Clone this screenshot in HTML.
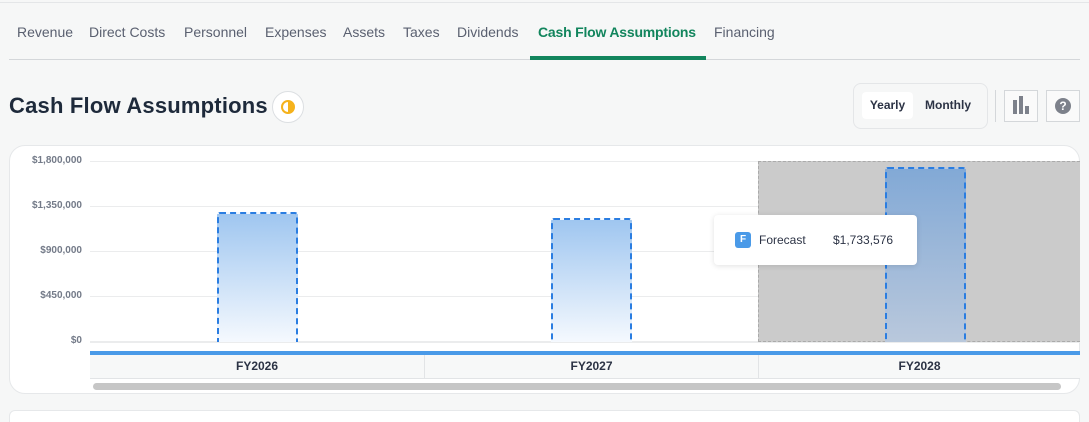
<!DOCTYPE html><html><head><style>
*{box-sizing:border-box;margin:0;padding:0}
html,body{width:1089px;height:422px;overflow:hidden}
body{background:#f6f7f7;font-family:"Liberation Sans",sans-serif;position:relative;color:#2c3345}
.a{position:absolute}
.tab{position:absolute;top:24px;font-size:14px;color:#5a6070;white-space:nowrap}
.yl{position:absolute;right:1007px;font-size:10px;color:#737a88;font-weight:bold;text-align:right}
.gl{position:absolute;left:90px;width:990px;height:1px;background:#ebeced}
.bar{position:absolute;width:81px;border:2px dashed #2a7de1;border-bottom:none;border-radius:3px 3px 0 0;background:linear-gradient(#9fc6f0,#f5f9fe)}
.xl{position:absolute;top:355px;height:24px;font-size:12px;font-weight:bold;color:#2c3345;text-align:center;line-height:22px;border-right:1px solid #e2e4e6}
</style></head><body>
<div class="a" style="left:0;top:2px;width:1089px;height:1px;background:#e4e6e8"></div>
<div class="tab" style="left:17px">Revenue</div>
<div class="tab" style="left:89px">Direct Costs</div>
<div class="tab" style="left:184px">Personnel</div>
<div class="tab" style="left:265px">Expenses</div>
<div class="tab" style="left:343px">Assets</div>
<div class="tab" style="left:403px">Taxes</div>
<div class="tab" style="left:457px">Dividends</div>
<div class="tab" style="left:538px;color:#12855d;font-weight:bold;letter-spacing:-0.2px">Cash Flow Assumptions</div>
<div class="tab" style="left:714px">Financing</div>
<div class="a" style="left:9px;top:59px;width:1071px;height:1px;background:#d4d7da"></div>
<div class="a" style="left:530px;top:56px;width:176px;height:4px;background:#12855d"></div>
<div class="a" style="left:9px;top:93px;font-size:22px;font-weight:bold;color:#1e2a3b;letter-spacing:0.2px">Cash Flow Assumptions</div>
<div class="a" style="left:272px;top:91px;width:32px;height:32px;border-radius:50%;background:#fff;border:1px solid #dcdfe2"></div>
<div class="a" style="left:281px;top:100px;width:14px;height:14px;border-radius:50%;border:2px solid #f5b21c;background:linear-gradient(90deg,#fff 50%,#f5b21c 50%)"></div>
<div class="a" style="left:853px;top:83px;width:135px;height:46px;border:1px solid #e4e6e8;border-radius:8px"></div>
<div class="a" style="left:862px;top:92px;width:51px;height:27px;background:#fff;border-radius:4px;font-size:12px;line-height:27px;text-align:center;font-weight:bold;color:#2c3345">Yearly</div>
<div class="a" style="left:925px;top:98px;font-size:12px;font-weight:bold;color:#2c3345">Monthly</div>
<div class="a" style="left:995px;top:90px;width:1px;height:32px;background:#d4d7da"></div>
<div class="a" style="left:1004px;top:90px;width:34px;height:32px;border:1px solid #d4d7da;background:#fafafa"></div>
<div class="a" style="left:1013px;top:100px;width:4px;height:14px;background:#7d818b"></div>
<div class="a" style="left:1019px;top:96px;width:4px;height:18px;background:#7d818b"></div>
<div class="a" style="left:1025px;top:106px;width:4px;height:8px;background:#7d818b"></div>
<div class="a" style="left:1046px;top:90px;width:34px;height:32px;border:1px solid #d4d7da;background:#fafafa"></div>
<div class="a" style="left:1055px;top:98px;width:16px;height:16px;border-radius:50%;background:#7d818b;color:#fff;font-size:12px;font-weight:bold;text-align:center;line-height:16px">?</div>
<div class="a" style="left:9px;top:145px;width:1071px;height:249px;background:#fff;border:1px solid #e6e8ea;border-radius:16px"></div>
<div class="gl" style="top:161px"></div><div class="gl" style="top:206px"></div><div class="gl" style="top:251px"></div><div class="gl" style="top:296px"></div><div class="gl" style="top:341px;height:2px"></div>
<div class="yl" style="top:155px">$1,800,000</div>
<div class="yl" style="top:200px">$1,350,000</div>
<div class="yl" style="top:245px">$900,000</div>
<div class="yl" style="top:290px">$450,000</div>
<div class="yl" style="top:335px">$0</div>
<div class="a" style="left:758px;top:161px;width:322px;height:181px;background:#cbcbcb;border:1px dashed #aaa;border-right:none"></div>
<div class="bar" style="left:217px;top:212px;height:130px"></div>
<div class="bar" style="left:551px;top:218px;height:124px"></div>
<div class="bar" style="left:885px;top:167px;height:175px;background:linear-gradient(#82a9d6,#b9c8dc)"></div>
<div class="a" style="left:90px;top:351px;width:990px;height:4px;background:#4a9ae8"></div>
<div class="a" style="left:90px;top:355px;width:990px;height:24px;background:#f7f8f8;border-bottom:1px solid #e2e4e6"></div>
<div class="xl" style="left:90px;width:335px">FY2026</div>
<div class="xl" style="left:425px;width:334px">FY2027</div>
<div class="xl" style="left:759px;width:321px;border-right:none">FY2028</div>
<div class="a" style="left:93px;top:383px;width:968px;height:7px;border-radius:4px;background:#c6c6c6"></div>
<div class="a" style="left:714px;top:215px;width:203px;height:50px;background:#fff;border-radius:4px;box-shadow:0 1px 6px rgba(0,0,0,.12)"></div>
<div class="a" style="left:735px;top:232px;width:16px;height:16px;background:#4a9ae8;border-radius:3px;color:#fff;font-size:10px;font-weight:bold;text-align:center;line-height:16px">F</div>
<div class="a" style="left:759px;top:233px;font-size:12px;color:#2c3345">Forecast</div>
<div class="a" style="left:833px;top:233px;font-size:12px;color:#2c3345">$1,733,576</div>
<div class="a" style="left:9px;top:410px;width:1071px;height:30px;background:#fff;border:1px solid #e6e8ea;border-radius:6px"></div>
</body></html>
